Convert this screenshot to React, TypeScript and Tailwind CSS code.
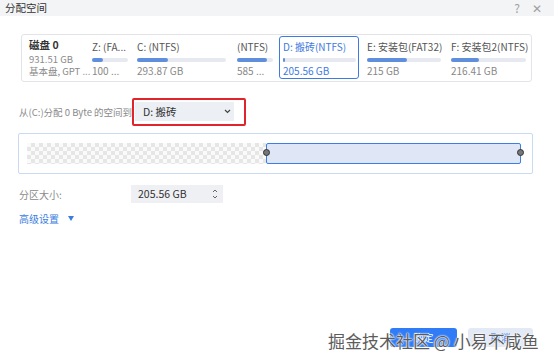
import React from 'react';

const FONT = '"Noto Sans CJK SC", "Noto Sans", "Liberation Sans", sans-serif';

type Part = {
  name: string;
  size: string;
  w: number;
  fill: number;
  barW: number;
  selected?: boolean;
  ml?: number;
};

const parts: Part[] = [
  { name: 'Z: (FA...', size: '100 ...', w: 45, fill: 11, barW: 36 },
  { name: 'C: (NTFS)', size: '293.87 GB', w: 100, fill: 31, barW: 89 },
  { name: '(NTFS)', size: '585 ...', w: 42, fill: 30, barW: 36 },
  { name: 'D: 搬砖(NTFS)', size: '205.56 GB', w: 80, fill: 2, barW: 73, selected: true },
  { name: 'E: 安装包(FAT32)', size: '215 GB', w: 84, fill: 40, barW: 74, ml: 8 },
  { name: 'F: 安装包2(NTFS)', size: '216.41 GB', w: 81, fill: 28, barW: 75 },
];

// 分区列
function PartCol({ p }: { p: Part }) {
  if (p.selected) {
    return (
      <div
        className="mt-[1px] h-[43px] shrink-0 rounded-[3px] border-[1.5px] border-[#3d7be0] px-[3px] pt-[3px]"
        style={{ width: p.w }}
      >
        <div className="text-[10px] leading-[14px] whitespace-nowrap text-[#3d7be0]">{p.name}</div>
        <div className="mt-[4px] h-[4px] rounded-full bg-[#e6e9f0]" style={{ width: p.barW }}>
          <div className="h-full rounded-full bg-[#5f8fdc]" style={{ width: p.fill }} />
        </div>
        <div className="mt-[2px] text-[10px] leading-[14px] text-[#3d7be0]">{p.size}</div>
      </div>
    );
  }
  return (
    <div className="shrink-0 overflow-hidden pt-[5px]" style={{ width: p.w, marginLeft: p.ml ?? 0 }}>
      <div className="text-[10px] leading-[14px] whitespace-nowrap text-[#555]">{p.name}</div>
      <div className="mt-[4px] h-[4px] rounded-full bg-[#e6e9f0]" style={{ width: p.barW }}>
        <div className="h-full rounded-full bg-[#5f8fdc]" style={{ width: p.fill }} />
      </div>
      <div className="mt-[2px] text-[10px] leading-[14px] whitespace-nowrap text-[#888]">{p.size}</div>
    </div>
  );
}

export default function App() {
  return (
    <div
      className="relative flex h-[363px] w-[554px] flex-col overflow-hidden bg-white"
      style={{ fontFamily: FONT }}
    >
      {/* 标题栏 */}
      <div className="flex h-[16px] items-center justify-between bg-[#f3f4f6] pl-[5px] pr-[12px]">
        <span className="text-[10.5px] leading-none text-[#333]">分配空间</span>
        <div className="flex items-center gap-[12px] text-[12px] leading-none text-[#a0a0a0]">
          <span>?</span>
          <span>✕</span>
        </div>
      </div>

      {/* 磁盘卡片 */}
      <div className="ml-[21px] mt-[18px] flex h-[48px] w-[511px] rounded-[3px] border border-[#e2e4e8] pl-[7px]">
        <div className="w-[63px] shrink-0 pt-[3px]">
          <div className="text-[10.5px] font-bold leading-[14px] text-[#333]">磁盘 0</div>
          <div className="mt-[1px] text-[9.5px] leading-[12px] text-[#8a8a8a]">931.51 GB</div>
          <div className="text-[9.5px] leading-[12px] whitespace-nowrap text-[#8a8a8a]">基本盘, GPT ...</div>
        </div>
        {parts.map((p) => (
          <PartCol key={p.name} p={p} />
        ))}
      </div>

      {/* 分配来源 */}
      <div className="mt-[16px] flex items-center pl-[19px]">
        <span className="w-[113px] shrink-0 text-[9.5px] whitespace-nowrap text-[#8a8a8a]">
          从(C:)分配 0 Byte 的空间到
        </span>
        <div className="h-[28px] w-[114px] rounded-[2px] border-2 border-[#e0242b] pb-[3px] pl-[1px] pr-[10px] pt-[2px]">
          <div className="flex h-[19px] items-center justify-between bg-[#eceff3] pl-[8px] pr-[3px]">
            <span className="text-[10.5px] text-[#333]">D: 搬砖</span>
            <svg width="7" height="5" viewBox="0 0 7 5">
              <path d="M1 1l2.5 2.5L6 1" fill="none" stroke="#444" strokeWidth="1.2" />
            </svg>
          </div>
        </div>
      </div>

      {/* 分区条 */}
      <div className="ml-[18px] mt-[7px] flex h-[41px] w-[515px] items-center rounded-[2px] border border-[#c8dbf3] pl-[8px]">
        <div className="h-[21px] w-[239px] bg-[conic-gradient(#e6e6e6_25%,#fafafa_0_50%,#e6e6e6_0_75%,#fafafa_0)] bg-[length:8px_8px]" />
        <div className="relative h-[21px] w-[255px] rounded-[2px] border-[1.5px] border-[#3b7ee6] bg-[#dfe7f6]">
          <div className="absolute left-[-4px] top-[5px] h-[7px] w-[7px] rounded-full border-[1.5px] border-[#333] bg-[#777]" />
          <div className="absolute right-[-4px] top-[5px] h-[7px] w-[7px] rounded-full border-[1.5px] border-[#333] bg-[#777]" />
        </div>
      </div>

      {/* 分区大小 */}
      <div className="mt-[11px] flex items-center pl-[19px]">
        <span className="w-[112px] text-[10px] text-[#8a8a8a]">分区大小:</span>
        <div className="flex h-[18px] w-[92px] items-center justify-between bg-[#eef0f3] pl-[7px] pr-[5px]">
          <span className="text-[10.5px] text-[#333]">205.56 GB</span>
          <svg width="6" height="12" viewBox="0 0 6 12">
            <path d="M1 4l2-2 2 2M1 8l2 2 2-2" fill="none" stroke="#666" strokeWidth="1" />
          </svg>
        </div>
      </div>

      {/* 高级设置 */}
      <div className="mt-[8px] flex items-center gap-[9px] pl-[19px]">
        <span className="text-[10px] text-[#3a7de0]">高级设置</span>
        <svg width="6" height="5" viewBox="0 0 6 5">
          <path d="M0 0h6L3 5z" fill="#3a7de0" />
        </svg>
      </div>

      {/* 底部按钮 */}
      <div className="mt-auto flex justify-end gap-[11px] pb-[16px] pr-[21px]">
        <button className="h-[19px] w-[67px] rounded-[3px] bg-[#2f7cf6] text-[10px] text-white">确定</button>
        <button className="h-[19px] w-[65px] rounded-[3px] bg-[#e4eaf5] text-[10px] text-[#3a7de0]">取消</button>
      </div>

      {/* 水印 */}
      <div className="absolute left-[328px] top-[329px] text-[17px] leading-[24px] whitespace-nowrap text-[#5c5c5c] [text-shadow:0_0_2px_#fff,0_0_2px_#fff,0_0_1px_#fff]">
        掘金技术社区 @ 小易不咸鱼
      </div>
    </div>
  );
}
